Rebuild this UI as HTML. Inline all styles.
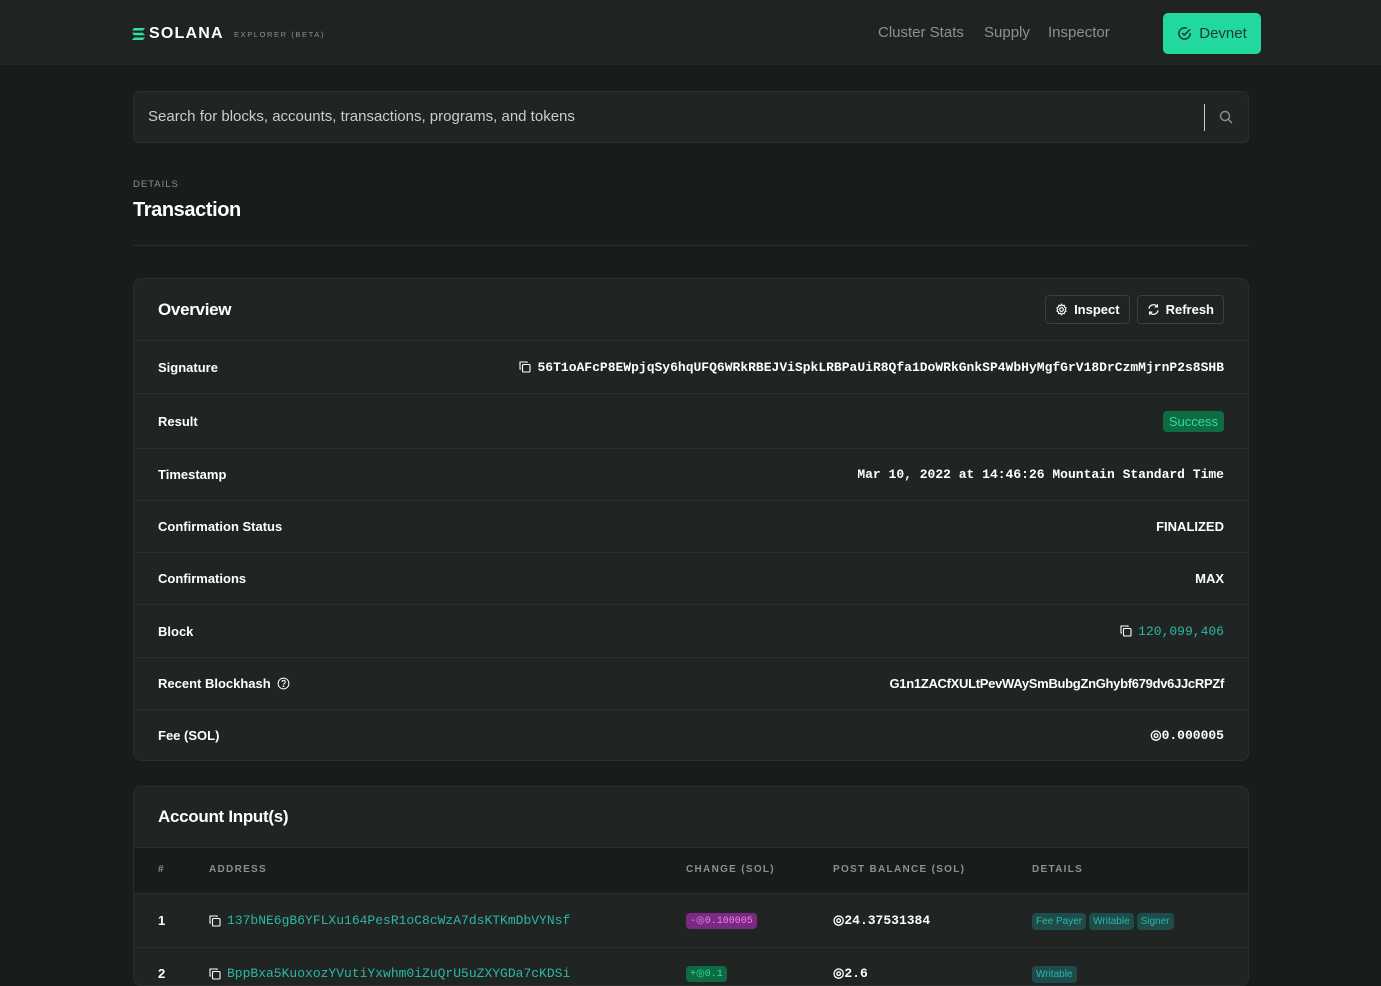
<!DOCTYPE html>
<html><head><meta charset="utf-8"><style>
*{box-sizing:border-box;margin:0;padding:0}
body{width:1381px;height:974px;overflow:hidden;background:#181c1b;font-family:"Liberation Sans",sans-serif;color:#fff;position:relative}
.hdr{position:absolute;left:0;top:0;width:1381px;height:67px;background:#1f2423;border-bottom:1px solid #111}
.mono{font-family:"Liberation Mono",monospace}
.card{position:absolute;left:133px;width:1116px;background:#202524;border:1px solid #2a2f2e;border-radius:8px;overflow:hidden}
.row{height:52px;border-top:1px solid #2a2f2e;display:flex;align-items:center;justify-content:space-between;padding:0 24px;font-size:13px;font-weight:bold}
.row .v{font-size:13px}
.btn{border:1px solid #3a403f;border-radius:4px;height:29px;padding:0 9px;display:flex;align-items:center;gap:6px;font-size:13px;font-weight:bold}
.th{position:absolute;top:0;font-size:10px;letter-spacing:1.3px;color:#8a9190;font-weight:bold}
.tag{display:inline-block;background:#1f4b4a;color:#2bb8a8;font-size:10px;padding:3px 4px;border-radius:4px;margin-right:3px}
</style></head><body>
<div class="hdr">
 <svg style="position:absolute;left:132px;top:28px" width="13" height="12" viewBox="0 0 13 12"><path d="M2 0h11l-2 2.5H0z M0 4.7h11l2 2.5H2z M2 9.5h11l-2 2.5H0z" fill="#2fe0a5"/></svg>
 <div style="position:absolute;left:149px;top:25px;font-size:16px;font-weight:bold;letter-spacing:1.2px">SOLANA</div>
 <div style="position:absolute;left:234px;top:30px;font-size:7.5px;letter-spacing:1.6px;color:#8a9190">EXPLORER (BETA)</div>
 <div style="position:absolute;left:878px;top:24px;font-size:15px;color:#8a9190">Cluster Stats</div>
 <div style="position:absolute;left:984px;top:24px;font-size:15px;color:#8a9190">Supply</div>
 <div style="position:absolute;left:1048px;top:24px;font-size:15px;color:#8a9190">Inspector</div>
 <div style="position:absolute;left:1163px;top:13px;width:98px;height:41px;background:#21d99f;border-radius:5px;color:#1c3a32;font-size:15px;display:flex;align-items:center;justify-content:center;gap:7px">
  <svg width="15" height="15" viewBox="0 0 16 16" fill="none" stroke="#1c3a32" stroke-width="1.6"><path d="M14 7.5A6 6 0 1 1 10.5 2.5"/><path d="M5.5 7.5l2.2 2.2L14 3.5"/></svg>Devnet</div>
</div>
<div style="position:absolute;left:133px;top:91px;width:1116px;height:52px;background:#202524;border:1px solid #2a2f2e;border-radius:6px">
 <div style="position:absolute;left:14px;top:16px;font-size:15px;color:#c8cdcc">Search for blocks, accounts, transactions, programs, and tokens</div>
 <div style="position:absolute;left:1070px;top:12px;width:1px;height:27px;background:#ccc"></div>
 <svg style="position:absolute;left:1085px;top:18px" width="14" height="14" viewBox="0 0 14 14" fill="none" stroke="#8a9190" stroke-width="1.4"><circle cx="6" cy="6" r="4.5"/><path d="M9.5 9.5L13 13"/></svg>
</div>
<div style="position:absolute;left:133px;top:179px;font-size:9.5px;letter-spacing:1px;color:#8a9190">DETAILS</div>
<div style="position:absolute;left:133px;top:199px;font-size:20px;font-weight:bold;letter-spacing:-0.4px">Transaction</div>
<div style="position:absolute;left:133px;top:245px;width:1116px;height:1px;background:#2a2f2e"></div>

<div class="card" style="top:278px;height:483px">
 <div style="height:61px;display:flex;align-items:center;justify-content:space-between;padding:0 24px">
  <div style="font-size:17px;font-weight:bold;letter-spacing:-0.3px">Overview</div>
  <div style="display:flex;gap:7px">
   <div class="btn"><svg width="13" height="13" viewBox="0 0 16 16" fill="none" stroke="#fff" stroke-width="1.4"><circle cx="8" cy="8" r="2.3"/><path d="M8 1.5l1.2 1.8 2.1-.5.5 2.1 1.8 1.2-1 1.9 1 1.9-1.8 1.2-.5 2.1-2.1-.5L8 14.5l-1.2-1.8-2.1.5-.5-2.1-1.8-1.2 1-1.9-1-1.9 1.8-1.2.5-2.1 2.1.5z"/></svg>Inspect</div>
   <div class="btn"><svg width="13" height="13" viewBox="0 0 16 16" fill="none" stroke="#fff" stroke-width="1.5"><path d="M2.5 7A5.5 5.5 0 0 1 12.5 4.5M13.5 9A5.5 5.5 0 0 1 3.5 11.5"/><path d="M12.8 1.5v3.3H9.5M3.2 14.5v-3.3h3.3"/></svg>Refresh</div>
  </div>
 </div>
 <div class="row" style="height:53px"><span>Signature</span><span class="v mono" style="display:flex;align-items:center;gap:6px"><svg width="12" height="12" viewBox="0 0 12 12" fill="none" stroke="#fff" stroke-width="1.1"><rect x="3.5" y="3.5" width="7.5" height="7.5" rx="1"/><path d="M2 8H1V1h7v1"/></svg>56T1oAFcP8EWpjqSy6hqUFQ6WRkRBEJViSpkLRBPaUiR8Qfa1DoWRkGnkSP4WbHyMgfGrV18DrCzmMjrnP2s8SHB</span></div>
 <div class="row" style="height:55px"><span>Result</span><span style="background:#0e6b43;color:#2ee09a;font-weight:normal;font-size:13px;padding:3px 6px;border-radius:4px">Success</span></div>
 <div class="row"><span>Timestamp</span><span class="v mono">Mar 10, 2022 at 14:46:26 Mountain Standard Time</span></div>
 <div class="row"><span>Confirmation Status</span><span>FINALIZED</span></div>
 <div class="row"><span>Confirmations</span><span>MAX</span></div>
 <div class="row" style="height:53px"><span>Block</span><span class="v mono" style="color:#2bb8a0;font-weight:normal;display:flex;align-items:center;gap:6px"><svg width="12" height="12" viewBox="0 0 12 12" fill="none" stroke="#fff" stroke-width="1.1"><rect x="3.5" y="3.5" width="7.5" height="7.5" rx="1"/><path d="M2 8H1V1h7v1"/></svg>120,099,406</span></div>
 <div class="row"><span style="display:flex;align-items:center;gap:6px">Recent Blockhash <svg width="13" height="13" viewBox="0 0 14 14" fill="none" stroke="#fff" stroke-width="1.1"><circle cx="7" cy="7" r="5.8"/><path d="M5.3 5.4a1.8 1.8 0 1 1 2.4 1.7c-.5.2-.7.6-.7 1.1"/><circle cx="7" cy="10" r=".4" fill="#fff"/></svg></span><span style="letter-spacing:-0.3px">G1n1ZACfXULtPevWAySmBubgZnGhybf679dv6JJcRPZf</span></div>
 <div class="row"><span>Fee (SOL)</span><span class="v mono">◎0.000005</span></div>
</div>

<div class="card" style="top:786px;height:200px">
 <div style="height:60px;display:flex;align-items:center;padding:0 24px;font-size:17px;font-weight:bold;letter-spacing:-0.3px">Account Input(s)</div>
 <div style="position:relative;height:47px;background:#181c1b;border-top:1px solid #2a2f2e;border-bottom:1px solid #2a2f2e">
  <div class="th" style="left:24px;top:16px">#</div>
  <div class="th" style="left:75px;top:16px">ADDRESS</div>
  <div class="th" style="left:552px;top:16px">CHANGE (SOL)</div>
  <div class="th" style="left:699px;top:16px">POST BALANCE (SOL)</div>
  <div class="th" style="left:898px;top:16px">DETAILS</div>
 </div>
 <div style="position:relative;height:54px;border-bottom:1px solid #2a2f2e;font-size:13px">
  <div style="position:absolute;left:24px;top:19px;font-weight:bold">1</div>
  <div class="mono" style="position:absolute;left:75px;top:19px;color:#2bb8a0;display:flex;gap:6px;align-items:center"><svg width="12" height="12" viewBox="0 0 12 12" fill="none" stroke="#fff" stroke-width="1.1"><rect x="3.5" y="3.5" width="7.5" height="7.5" rx="1"/><path d="M2 8H1V1h7v1"/></svg>137bNE6gB6YFLXu164PesR1oC8cWzA7dsKTKmDbVYNsf</div>
  <div class="mono" style="position:absolute;left:552px;top:19px;background:#7a2a80;color:#f07ef8;font-size:10px;padding:2px 4px;border-radius:4px">-◎0.100005</div>
  <div class="mono" style="position:absolute;left:699px;top:19px;font-weight:bold">◎24.37531384</div>
  <div style="position:absolute;left:898px;top:18px"><span class="tag">Fee Payer</span><span class="tag">Writable</span><span class="tag">Signer</span></div>
 </div>
 <div style="position:relative;height:40px;font-size:13px">
  <div style="position:absolute;left:24px;top:18px;font-weight:bold">2</div>
  <div class="mono" style="position:absolute;left:75px;top:18px;color:#2bb8a0;display:flex;gap:6px;align-items:center"><svg width="12" height="12" viewBox="0 0 12 12" fill="none" stroke="#fff" stroke-width="1.1"><rect x="3.5" y="3.5" width="7.5" height="7.5" rx="1"/><path d="M2 8H1V1h7v1"/></svg>BppBxa5KuoxozYVutiYxwhm0iZuQrU5uZXYGDa7cKDSi</div>
  <div class="mono" style="position:absolute;left:552px;top:18px;background:#0e6b43;color:#2ee09a;font-size:10px;padding:2px 4px;border-radius:4px">+◎0.1</div>
  <div class="mono" style="position:absolute;left:699px;top:18px;font-weight:bold">◎2.6</div>
  <div style="position:absolute;left:898px;top:17px"><span class="tag">Writable</span></div>
 </div>
</div>
</body></html>
